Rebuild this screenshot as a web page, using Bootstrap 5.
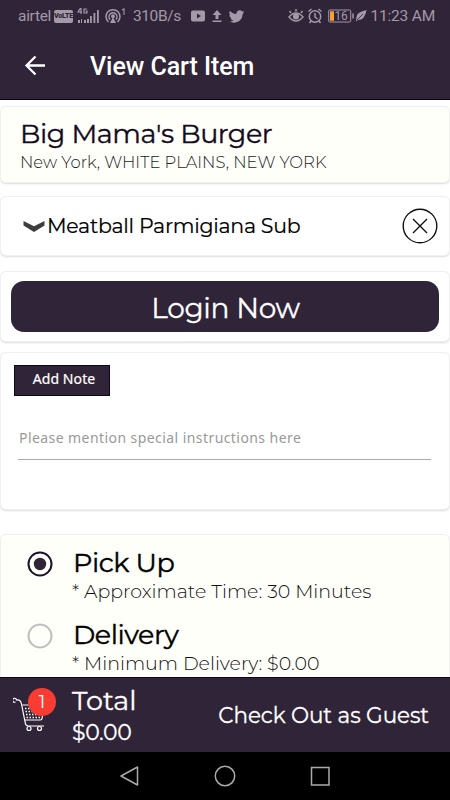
<!DOCTYPE html>
<html lang="en">
<head>
<meta charset="utf-8">
<meta name="viewport" content="width=device-width, initial-scale=1">
<title>View Cart Item</title>
<link href="https://cdn.jsdelivr.net/npm/bootstrap@5.3.0/dist/css/bootstrap.min.css" rel="stylesheet">
<style>
:root{--plum:#302439;--cream:#fffffa}
body{font-family:Montserrat,Inter,"Liberation Sans",sans-serif;color:#000;width:450px;height:800px;line-height:1}
svg{display:block;flex:none}
.status-bar{height:32px;background:var(--plum);color:#a29aa8;font:400 15.5px/16px Roboto,sans-serif;padding:0 15px 0 18px;letter-spacing:-.2px}
.carrier{width:33px;letter-spacing:-.3px}
.volte{width:19px;height:13px;border-radius:2px;margin-left:3px;background:#a29aa8;color:var(--plum);font:900 7px/13px Roboto,sans-serif;letter-spacing:-.2px}
.speed{width:48px;margin-left:7px;letter-spacing:-.4px}
.gap-left{margin-left:9px}
.battery-level{left:7px;top:2px;font-size:12px;line-height:11px}
.app-bar{height:68px;background:var(--plum);color:#fff;border-bottom:1px solid #0d0714;padding:0 24px}
.app-title{font:500 25px/30px Roboto,sans-serif;margin-left:44px;padding-top:2px;letter-spacing:-.05px}
.panel{border:1px solid #f0f0f0;border-radius:6px;box-shadow:0 1px 2px rgba(0,0,0,.14);background:#fff}
.panel-cream{background:var(--cream)}
.store-panel{height:77px;margin-top:6px;padding:12px 19px}
.store-name{font-size:27px;line-height:29px;color:#140a20;letter-spacing:-.45px;-webkit-text-stroke:.35px #140a20}
.store-place{font-size:16.4px;line-height:28px;font-weight:300;color:#222}
.item-panel{height:60px;margin-top:13px;padding:0 11px 0 22px}
.item-name{font-size:20.5px;letter-spacing:-.27px;-webkit-text-stroke:.2px #000;padding-top:1px;margin-left:2px}
.login-panel{height:71px;margin-top:15px;padding:9px 10px}
.login-btn{height:51px;border-radius:13px;background:var(--plum);color:#fff;font-size:28px;letter-spacing:-.3px;-webkit-text-stroke:.3px #fff;border:0;padding:2px 0 0 1px}
.login-btn:hover{background:var(--plum);color:#fff}
.note-panel{height:158px;margin-top:10px;padding:12px 17px 0 13px}
.note-btn{width:96px;height:31px;background:var(--plum);color:#fff;border:1px solid #100818;border-radius:0;font:400 14px/16px "Noto Sans",sans-serif;padding:0 0 3px 4px;letter-spacing:.1px;-webkit-text-stroke:.2px #fff}
.note-input{width:413px;height:35px;margin:29px 0 0 4px;padding:0 0 9px 1px;border:0;border-bottom:1px solid #aaa;border-radius:0;font:400 14px/20px "Noto Sans",sans-serif;letter-spacing:.43px}
.note-input::placeholder{color:#999}
.ways-panel{margin-top:24px;padding:12px 20px 0 26px;height:143px;border-bottom:0;border-radius:6px 6px 0 0}
.way{height:72px}
.way-name{font-size:27px;line-height:31px;padding-left:1px;letter-spacing:-.45px;-webkit-text-stroke:.4px #000}
.way-info{font-size:19px;line-height:28px;font-weight:300;color:#111}
.way-dot{margin-top:4px;margin-right:19px}
.total-bar{height:75px;background:var(--plum);color:#fff;padding:0 21px 0 13px;border-top:1px solid #0d0714}
.cart-count{width:28px;height:28px;background:#f93c32;color:#fff;font-size:18px;line-height:28px;left:15px;top:-9px}
.totals{margin-left:25px;padding-top:3px}
.total-label{font-size:27px;line-height:32px;-webkit-text-stroke:.3px #fff}
.total-sum{font-size:22px;line-height:31px;letter-spacing:-.4px;-webkit-text-stroke:.3px #fff}
.check-out{font-size:21.5px;letter-spacing:-.08px;padding-top:2px;-webkit-text-stroke:.3px #fff}
.nav-keys{height:48px;background:#000}
</style>
</head>
<body class="bg-white overflow-hidden d-flex flex-column">
<header>
  <div class="status-bar d-flex align-items-center">
    <span class="carrier">airtel</span>
    <span class="volte text-center">VoLTE</span>
    <svg class="ms-1" width="24" height="18" viewBox="0 0 24 18" fill="#a29aa8"><path d="M3.500 1 1 5h4M4 1v6M10 2H7v4h3V4H8.500" fill="none" stroke="#a29aa8" stroke-width="1.200"/><path d="M1 13h2v3H1zM4 12h1v4H4zM7 13h2v3H7zM10 12h2v4h-2zM13 9h1.800v7H13zM16.500 6h1.800v10h-1.800zM20 3h1.800v13H20z"/></svg>
    <svg class="ms-1" width="21" height="18" viewBox="0 0 21 18" fill="none" stroke="#a29aa8" stroke-width="1.500"><path d="M3.500 15a7 7 0 1 1 9 0M5 12.500a4 4 0 1 1 6 0"/><circle cx="8" cy="9.300" r="1.200" fill="#a29aa8"/><path d="m8 10-3 6h6z" fill="#a29aa8" stroke="none"/><path d="m17 3 2-1v6" stroke-width="1.100"/></svg>
    <span class="speed">310B/s</span>
    <svg class="gap-left" width="54" height="16" viewBox="0 0 54 16" fill="#a29aa8"><path fill-rule="evenodd" d="M3 2.500h10q2 0 2 2v7q0 2-2 2H3q-2 0-2-2v-7q0-2 2-2zm4 3v5l4-2.500zM27 2 22.500 7h3v4h3V7h3zM22.500 12.500h9V14h-9z"/><path d="M40 3c2 2 4 3 6.300 3 0-4 4-5 5.800-2.500L54 3l-1 2 1-.4-1.500 2c0 7-8 10-13 7 2 0 3-.5 4-1.300-2 0-2.500-1-3-2h1.300C40 9.500 39.300 8 39.300 7l1.200.3C39 6 39 4.500 40 3z"/></svg>
    <svg class="ms-auto" width="36" height="18" viewBox="0 0 36 18" fill="none" stroke="#a29aa8" stroke-width="1.500"><path d="M1 10q7-8 14 0-7 8-14 0zM3 6 1.500 4M13 6l1.500-2M8 4.500V2"/><circle cx="8" cy="9.500" r="2.300" fill="#a29aa8"/><circle cx="27" cy="9.500" r="5.700"/><path d="M27 6v4l2.500 2M20.500 4.500l3-2.500M30.500 2l3 2.500M23 14l-1.500 2M31 14l1.500 2"/></svg>
    <span class="position-relative ms-1">
      <svg width="27" height="14" viewBox="0 0 27 14"><rect x=".7" y="1" width="22" height="12" rx="1" fill="none" stroke="#a29aa8"/><path d="M2 2.300h4v9.500H2z" fill="#f9a12d"/><path d="M24.300 4.500h1.500v5h-1.500z" fill="#a29aa8"/></svg>
      <span class="battery-level position-absolute">16</span>
    </span>
    <svg width="12" height="14" viewBox="0 0 12 14"><path d="M11.500 1Q2 3 1.500 7.500L1 12.500 3 11Q10 11 11.500 1z" fill="#a29aa8"/><path d="M2 11 8 5" stroke="#302439" stroke-width=".8"/></svg>
    <span class="ps-1">11:23 AM</span>
  </div>
  <div class="app-bar d-flex align-items-center">
    <svg width="22" height="22" viewBox="0 0 22 22" fill="none" stroke="#fff" stroke-width="2.300"><path d="M21 10.500H3M11.500 1.500l-9 9 9 9"/></svg>
    <span class="app-title">View Cart Item</span>
  </div>
</header>
<main class="flex-grow-1 overflow-hidden">
  <section class="panel panel-cream store-panel">
    <div class="store-name">Big Mama's Burger</div>
    <div class="store-place">New York, WHITE PLAINS, NEW YORK</div>
  </section>
  <section class="panel item-panel d-flex align-items-center">
    <svg width="22" height="13" viewBox="0 0 22 13"><path d="m.5 1 10.500 5.300L21.500 1v4.500L11 12 .5 5.500z" fill="#3d3d3d"/></svg>
    <span class="item-name">Meatball Parmigiana Sub</span>
    <svg class="ms-auto" width="36" height="36" viewBox="0 0 36 36" fill="none" stroke="#111" stroke-width="1.400"><circle cx="18" cy="18" r="16.800"/><path d="m11 11 14 14M25 11 11 25"/></svg>
  </section>
  <section class="panel login-panel">
    <button class="btn login-btn w-100">Login Now</button>
  </section>
  <section class="panel note-panel">
    <button class="btn note-btn d-block">Add Note</button>
    <input class="form-control note-input" placeholder="Please mention special instructions here">
  </section>
  <section class="panel panel-cream ways-panel">
    <div class="way d-flex align-items-start">
      <svg class="way-dot" width="26" height="26" viewBox="0 0 26 26"><circle cx="13" cy="13" r="11.500" fill="none" stroke="#1d1228" stroke-width="2"/><circle cx="13" cy="13" r="6.200" fill="#302439"/></svg>
      <div><div class="way-name">Pick Up</div><div class="way-info">* Approximate Time: 30 Minutes</div></div>
    </div>
    <div class="way d-flex align-items-start">
      <svg class="way-dot" width="26" height="26" viewBox="0 0 26 26"><circle cx="13" cy="13" r="11.500" fill="none" stroke="#bfbfbf" stroke-width="2"/></svg>
      <div><div class="way-name">Delivery</div><div class="way-info">* Minimum Delivery: $0.00</div></div>
    </div>
  </section>
</main>
<footer>
  <div class="total-bar d-flex align-items-center">
    <span class="position-relative">
      <svg width="34" height="36" viewBox="0 0 34 36" fill="none" stroke="#fff" stroke-width="1.200"><path d="M2.500 5A2 2 0 1 1 3.500 3q4-1 5 4l4 20q.5 2 3 2H31M9.500 8H30l-.8 13q-.2 2-2 2H12"/><path d="M12 11.500h17M12.500 14.500H29M13 17.500h16M13.500 20.500H28" stroke-width="1.500" stroke-dasharray="1.500 1.500"/><circle cx="16" cy="31.500" r="2"/><circle cx="26.500" cy="31.500" r="2"/></svg>
      <span class="cart-count rounded-circle text-center position-absolute">1</span>
    </span>
    <div class="totals"><div class="total-label">Total</div><div class="total-sum">$0.00</div></div>
    <span class="check-out ms-auto">Check Out as Guest</span>
  </div>
  <div class="nav-keys d-flex align-items-center justify-content-center">
    <svg width="212" height="24" viewBox="0 0 212 24" fill="none" stroke="#aaa" stroke-width="1.500"><path d="M18.500 3v18L2 12z" stroke-linejoin="round"/><circle cx="106" cy="12" r="9.700"/><path d="M192.500 3.500h17.500v17.500h-17.500z"/></svg>
  </div>
</footer>
<script src="https://cdn.jsdelivr.net/npm/bootstrap@5.3.0/dist/js/bootstrap.bundle.min.js"></script>
</body>
</html>
